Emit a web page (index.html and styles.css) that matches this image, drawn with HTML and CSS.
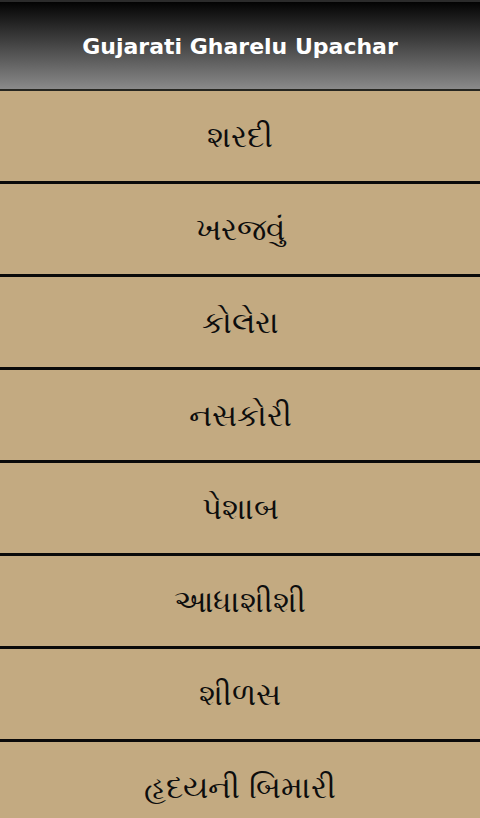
FILE: index.html
```html
<!DOCTYPE html>
<html>
    <head>
        <title>Gujarati Gharelu Upachar</title>
        <link rel="stylesheet" href="styles.css">
    </head>
    <body>
        <div class="titleBar">Gujarati Gharelu Upachar</div>
        <div class="list">
            <div class="item">શરદી</div>
            <div class="item">ખરજવું</div>
            <div class="item">કોલેરા</div>
            <div class="item">નસકોરી</div>
            <div class="item">પેશાબ</div>
            <div class="item">આધાશીશી</div>
            <div class="item">શીળસ</div>
            <div class="item">હૃદયની બિમારી</div>
        </div>
    </body>
</html>
```

FILE: styles.css
```css
body{
    margin: 0;
    background: #c3aa81;
    font-family: "DejaVu Sans", sans-serif;
    overflow: hidden;
}

.titleBar{
    box-sizing: border-box;
    height: 91px;
    padding-top: 2px;
    border-top: 2px solid #2b2b2b;
    border-bottom: 2px solid #262621;
    background: linear-gradient(#030303, #8a8a8a);
    color: #ffffff;
    font-weight: bold;
    font-size: 22px;
    display: flex;
    align-items: center;
    justify-content: center;
}

.item{
    height: 90px;
    border-bottom: 3px solid #0a0a0a;
    display: flex;
    align-items: center;
    justify-content: center;
    font-size: 31px;
    color: #0d0d0d;
}
```
